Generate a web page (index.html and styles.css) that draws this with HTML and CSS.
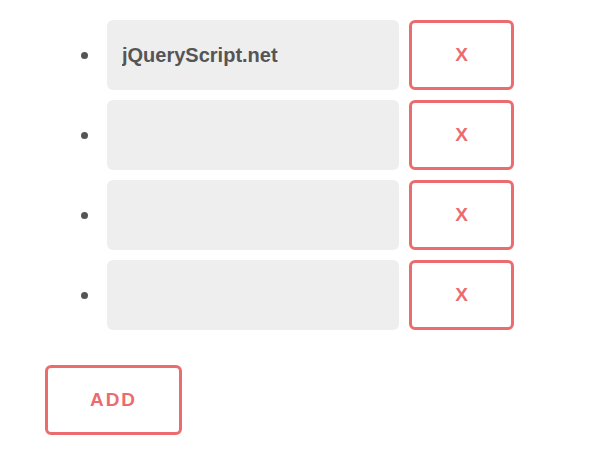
FILE: index.html
```html
<!DOCTYPE html>
<html>
<head>
<meta charset="utf-8">
<link rel="stylesheet" href="styles.css">
</head>
<body>
<div class="app">
  <ul class="list">
    <li class="row"><input class="field" type="text" value="jQueryScript.net"><button class="btn-remove">X</button></li>
    <li class="row"><input class="field" type="text" value=""><button class="btn-remove">X</button></li>
    <li class="row"><input class="field" type="text" value=""><button class="btn-remove">X</button></li>
    <li class="row"><input class="field" type="text" value=""><button class="btn-remove">X</button></li>
  </ul>
  <button class="btn-add">ADD</button>
</div>
</body>
</html>
```
FILE: styles.css
```css
html, body {
  margin: 0;
  padding: 0;
  background: #fff;
}
body {
  font-family: "Liberation Sans", Arial, sans-serif;
}
.app {
  padding: 20px 0 0 45px;
}
.list {
  list-style: none;
  margin: 0;
  padding: 0 0 0 36px;
  display: flex;
  flex-direction: column;
  gap: 10px;
}
.row {
  display: flex;
  align-items: center;
  gap: 10px;
}
.row::before {
  content: "";
  width: 7px;
  height: 7px;
  border-radius: 50%;
  background: #555;
  margin-right: 9px;
  flex: none;
}
.field {
  box-sizing: border-box;
  width: 292px;
  height: 70px;
  border: none;
  border-radius: 6px;
  background: #eeeeee;
  padding: 0 15px;
  font-family: "Liberation Sans", Arial, sans-serif;
  font-size: 20px;
  font-weight: bold;
  color: #555;
  outline: none;
}
.btn-remove,
.btn-add {
  box-sizing: border-box;
  height: 70px;
  background: #fff;
  border: 3px solid #ec6b6e;
  border-radius: 6px;
  color: #ec6b6e;
  font-family: "Liberation Sans", Arial, sans-serif;
  font-weight: bold;
  font-size: 19px;
  padding: 0;
  cursor: pointer;
}
.btn-remove {
  width: 105px;
}
.btn-add {
  width: 137px;
  margin-top: 35px;
  letter-spacing: 2px;
}
```
